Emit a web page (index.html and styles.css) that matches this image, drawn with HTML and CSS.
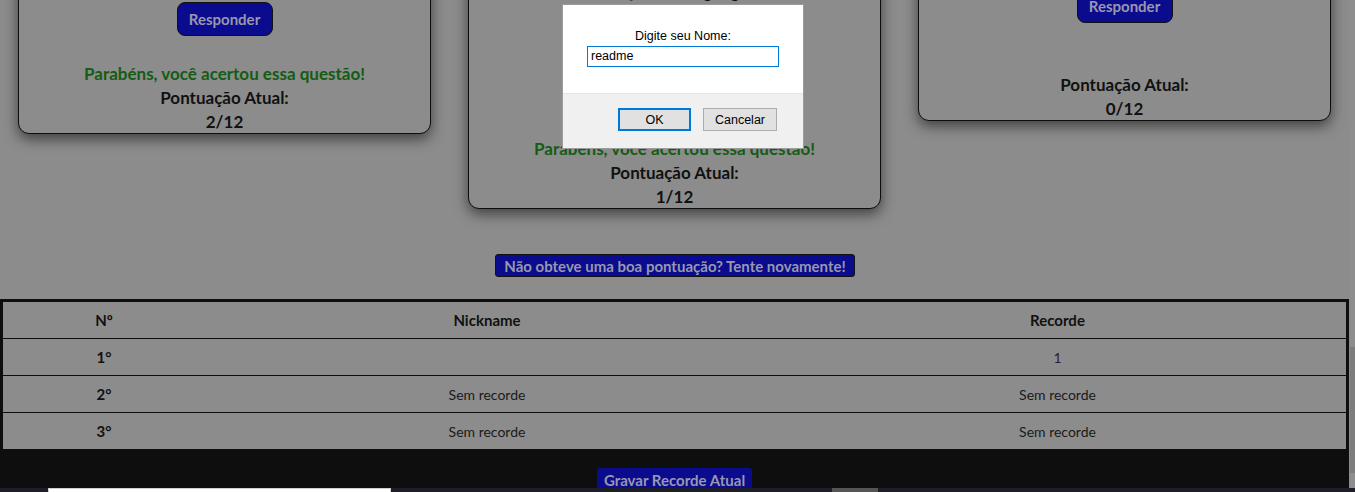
FILE: index.html
```html
<!DOCTYPE html>
<html lang="pt-BR">
<head>
<meta charset="utf-8">
<title>Quiz</title>
<link rel="stylesheet" href="styles.css">
</head>
<body>
<main class="page">
  <section class="cards">
    <article class="card card--a">
      <div class="q">
        <h3 class="q-title">Questão 1</h3>
      </div>
      <button class="btn-resp" type="button">Responder</button>
      <p class="msg">Parabéns, você acertou essa questão!</p>
      <p class="label">Pontuação Atual:</p>
      <p class="score">2/12</p>
    </article>
    <article class="card card--b">
      <div class="q">
        <h3 class="q-title">Questão 2</h3>
        <p class="q-line">Qual é a linguagem?</p>
      </div>
      <button class="btn-resp" type="button">Responder</button>
      <p class="msg">Parabéns, você acertou essa questão!</p>
      <p class="label">Pontuação Atual:</p>
      <p class="score">1/12</p>
    </article>
    <article class="card card--c">
      <div class="q">
        <h3 class="q-title">Questão 3</h3>
      </div>
      <button class="btn-resp" type="button">Responder</button>
      <p class="msg"></p>
      <p class="label">Pontuação Atual:</p>
      <p class="score">0/12</p>
    </article>
  </section>

  <div class="retry-wrap">
    <button class="retry" type="button">Não obteve uma boa pontuação? Tente novamente!</button>
  </div>

  <section class="board">
    <table class="rank">
      <thead>
        <tr><th class="c-pos">Nº</th><th class="c-nick">Nickname</th><th>Recorde</th></tr>
      </thead>
      <tbody>
        <tr><td class="c-pos">1°</td><td></td><td class="rec-link">1</td></tr>
        <tr><td class="c-pos">2°</td><td>Sem recorde</td><td>Sem recorde</td></tr>
        <tr><td class="c-pos">3°</td><td>Sem recorde</td><td>Sem recorde</td></tr>
      </tbody>
    </table>
    <div class="save-wrap">
      <button class="save" type="button">Gravar Recorde Atual</button>
    </div>
  </section>
</main>

<div class="dialog" role="dialog">
  <div class="dlg-body">
    <div class="dlg-label">Digite seu Nome:</div>
    <div class="dlg-input">readme</div>
  </div>
  <div class="dlg-foot">
    <button class="dlg-btn dlg-ok" type="button">OK</button>
    <button class="dlg-btn" type="button">Cancelar</button>
  </div>
</div>

<div class="scrollbar"><div class="thumb"></div></div>

<div class="taskbar">
  <div class="tb-field"></div>
  <div class="tb-gap"></div>
  <div class="tb-item"></div>
</div>
</body>
</html>
```

FILE: styles.css
```css
html, body {
  margin: 0;
  height: 492px;
  overflow: hidden;
  background: #8c8c8c;
}

body {
  width: 1350px;
  font-family: Lato, "Open Sans", sans-serif;
  color: #111;
}

.cards {
  display: flex;
  align-items: flex-start;
  gap: 37px;
  padding-left: 18px;
  margin-top: -150px;
}

.card {
  width: 413px;
  box-sizing: border-box;
  border: 1px solid #0d0d0d;
  border-radius: 11px;
  background: #8c8c8c;
  box-shadow: 0 5px 14px rgba(0, 0, 0, 0.55);
  text-align: center;
}

.q {
  overflow: hidden;
}

.card--a .q { height: 151px; }
.card--b .q { height: 226px; }
.card--c .q { height: 138px; }

.q-title {
  margin: 16px 0 0;
  font-size: 18px;
}

.q-line {
  margin: 91px 0 0;
  padding-left: 40px;
  font-size: 17px;
  font-weight: bold;
  line-height: 24px;
}

.btn-resp {
  display: block;
  margin: 0 auto;
  width: 96px;
  height: 34px;
  border: 1px solid #111;
  border-radius: 8px;
  background: #0b0b8e;
  color: #9898ac;
  font-family: inherit;
  font-size: 15px;
  font-weight: bold;
}

.msg {
  margin: 26px 0 0;
  height: 24px;
  line-height: 24px;
  font-size: 17px;
  font-weight: bold;
  color: #145c14;
}

.label,
.score {
  margin: 0;
  line-height: 24px;
  font-size: 17px;
  font-weight: bold;
}

.score {
  line-height: 23px;
}

.retry-wrap {
  padding-top: 45px;
  text-align: center;
}

.retry {
  height: 23px;
  padding: 0 8px;
  border: 1px solid #111;
  border-radius: 3px;
  background: #0b0b8e;
  color: #9898ac;
  font-family: inherit;
  font-size: 15px;
  font-weight: bold;
}

.board {
  margin: 22px 1px 0 0;
  padding: 3px 3px 0;
  height: 186px;
  background: #0e0e0e;
}

.rank {
  width: 100%;
  border-collapse: collapse;
  background: #8c8c8c;
  font-size: 14px;
}

.rank th,
.rank td {
  height: 36px;
  padding: 0;
  text-align: center;
  border-bottom: 1px solid #0e0e0e;
}

.rank tbody tr:last-child td {
  border-bottom: 0;
}

.rank th {
  font-weight: bold;
  font-size: 15px;
}

.rank td {
  font-weight: normal;
  color: #1a1a1a;
}

.rank .c-pos {
  width: 202px;
  font-weight: bold;
  font-size: 15px;
  color: #111;
}

.rank .c-nick {
  width: 564px;
}

.rank .rec-link {
  color: #2e1c36;
}

.save-wrap {
  padding-top: 19px;
  text-align: center;
}

.save {
  height: 24px;
  padding: 0 7px;
  border: 0;
  border-radius: 3px;
  background: #0b0b8e;
  color: #9898ac;
  font-family: inherit;
  font-size: 15px;
  font-weight: bold;
}

/* modal prompt */
.dialog {
  position: fixed;
  left: 562px;
  top: 4px;
  width: 242px;
  height: 145px;
  box-sizing: border-box;
  border: 1px solid #9c9c9c;
  background: #fff;
  font-family: "Liberation Sans", Arial, sans-serif;
  font-size: 12px;
  color: #000;
  display: flex;
  flex-direction: column;
}

.dlg-body {
  height: 88px;
  padding-top: 24px;
  box-sizing: border-box;
  display: flex;
  flex-direction: column;
  align-items: center;
}

.dlg-label {
  line-height: 14px;
  margin-bottom: 3px;
  font-size: 12.5px;
}

.dlg-input {
  width: 192px;
  height: 21px;
  box-sizing: border-box;
  border: 1px solid #0078d7;
  padding: 0 3px;
  line-height: 19px;
  font-size: 12.5px;
}

.dlg-foot {
  flex: 1;
  background: #f0f0f0;
  border-top: 1px solid #e4e4e4;
  display: flex;
  justify-content: flex-end;
  align-items: flex-start;
  gap: 12px;
  padding: 14px 26px 0 0;
}

.dlg-btn {
  width: 74px;
  height: 23px;
  box-sizing: border-box;
  border: 1px solid #adadad;
  background: #e1e1e1;
  font-family: "Liberation Sans", Arial, sans-serif;
  font-size: 12.5px;
  color: #000;
  padding: 0;
}

.dlg-ok {
  width: 73px;
  border: 2px solid #0078d7;
}

/* window chrome */
.scrollbar {
  position: fixed;
  right: 0;
  top: 0;
  width: 5px;
  height: 488px;
  background: #8e8e8e;
}

.thumb {
  margin-top: 347px;
  height: 126px;
  background: #7d7d7d;
}

.taskbar {
  position: fixed;
  left: 0;
  bottom: 0;
  width: 100%;
  height: 4px;
  background: #1d1e29;
  display: flex;
}

.tb-field {
  margin-left: 48px;
  width: 343px;
  box-sizing: border-box;
  border: 1px solid #cfcfcf;
  border-bottom: 0;
  background: #fff;
}

.tb-gap {
  width: 441px;
}

.tb-item {
  width: 46px;
  background: #555;
}
```
